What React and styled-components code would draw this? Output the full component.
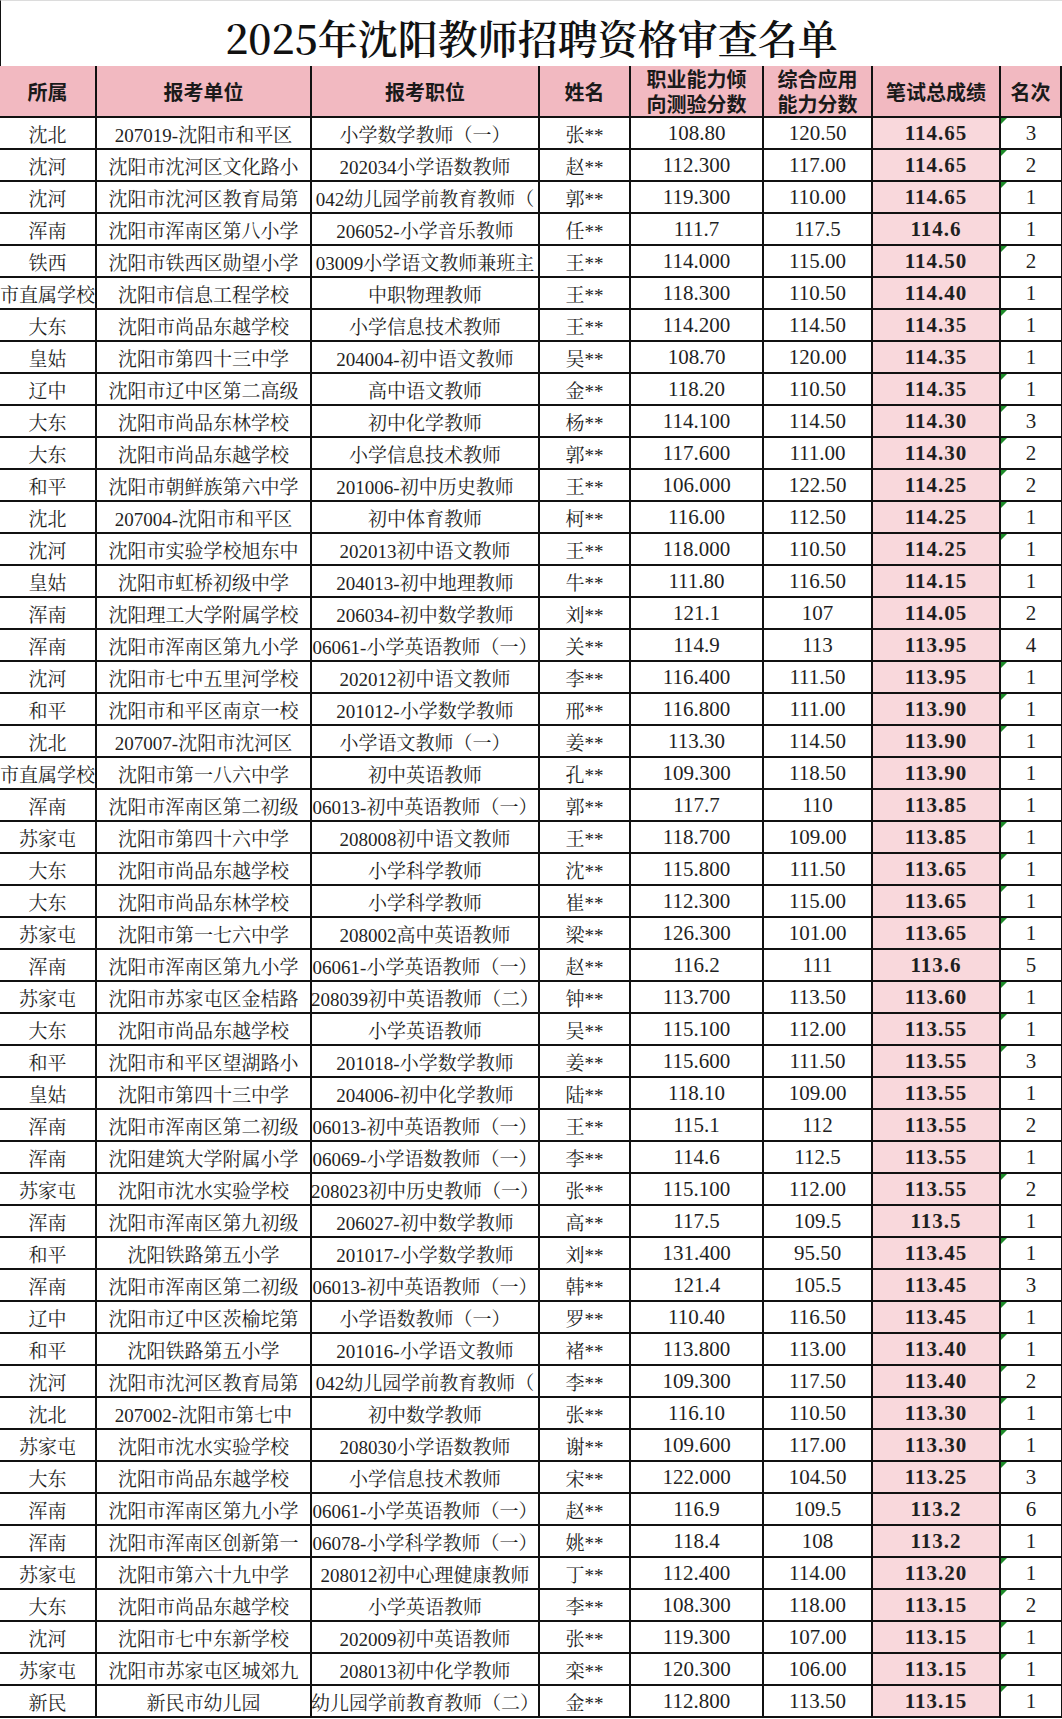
import { createGlobalStyle } from "styled-components";
import styled from "styled-components";

const GlobalStyle = createGlobalStyle`
  html, body {
    margin: 0;
    padding: 0;
    background: #ffffff;
  }
  body {
    font-family: "Liberation Serif", "Noto Serif CJK SC", "Noto Sans CJK SC", serif;
    color: #1a1a1a;
  }
`;

// 所属|报考单位|报考职位|姓名|职业能力|综合应用|总成绩|名次
const raw = `沈北|207019-沈阳市和平区|小学数学教师（一）|张**|108.80|120.50|114.65|3
沈河|沈阳市沈河区文化路小|202034小学语数教师|赵**|112.300|117.00|114.65|2
沈河|沈阳市沈河区教育局第|042幼儿园学前教育教师（|郭**|119.300|110.00|114.65|1
浑南|沈阳市浑南区第八小学|206052-小学音乐教师|任**|111.7|117.5|114.6|1
铁西|沈阳市铁西区勋望小学|03009小学语文教师兼班主|王**|114.000|115.00|114.50|2
市直属学校|沈阳市信息工程学校|中职物理教师|王**|118.300|110.50|114.40|1
大东|沈阳市尚品东越学校|小学信息技术教师|王**|114.200|114.50|114.35|1
皇姑|沈阳市第四十三中学|204004-初中语文教师|吴**|108.70|120.00|114.35|1
辽中|沈阳市辽中区第二高级|高中语文教师|金**|118.20|110.50|114.35|1
大东|沈阳市尚品东林学校|初中化学教师|杨**|114.100|114.50|114.30|3
大东|沈阳市尚品东越学校|小学信息技术教师|郭**|117.600|111.00|114.30|2
和平|沈阳市朝鲜族第六中学|201006-初中历史教师|王**|106.000|122.50|114.25|2
沈北|207004-沈阳市和平区|初中体育教师|柯**|116.00|112.50|114.25|1
沈河|沈阳市实验学校旭东中|202013初中语文教师|王**|118.000|110.50|114.25|1
皇姑|沈阳市虹桥初级中学|204013-初中地理教师|牛**|111.80|116.50|114.15|1
浑南|沈阳理工大学附属学校|206034-初中数学教师|刘**|121.1|107|114.05|2
浑南|沈阳市浑南区第九小学|06061-小学英语教师（一）|关**|114.9|113|113.95|4
沈河|沈阳市七中五里河学校|202012初中语文教师|李**|116.400|111.50|113.95|1
和平|沈阳市和平区南京一校|201012-小学数学教师|邢**|116.800|111.00|113.90|1
沈北|207007-沈阳市沈河区|小学语文教师（一）|姜**|113.30|114.50|113.90|1
市直属学校|沈阳市第一八六中学|初中英语教师|孔**|109.300|118.50|113.90|1
浑南|沈阳市浑南区第二初级|06013-初中英语教师（一）|郭**|117.7|110|113.85|1
苏家屯|沈阳市第四十六中学|208008初中语文教师|王**|118.700|109.00|113.85|1
大东|沈阳市尚品东越学校|小学科学教师|沈**|115.800|111.50|113.65|1
大东|沈阳市尚品东林学校|小学科学教师|崔**|112.300|115.00|113.65|1
苏家屯|沈阳市第一七六中学|208002高中英语教师|梁**|126.300|101.00|113.65|1
浑南|沈阳市浑南区第九小学|06061-小学英语教师（一）|赵**|116.2|111|113.6|5
苏家屯|沈阳市苏家屯区金桔路|208039初中英语教师（二）|钟**|113.700|113.50|113.60|1
大东|沈阳市尚品东越学校|小学英语教师|吴**|115.100|112.00|113.55|1
和平|沈阳市和平区望湖路小|201018-小学数学教师|姜**|115.600|111.50|113.55|3
皇姑|沈阳市第四十三中学|204006-初中化学教师|陆**|118.10|109.00|113.55|1
浑南|沈阳市浑南区第二初级|06013-初中英语教师（一）|王**|115.1|112|113.55|2
浑南|沈阳建筑大学附属小学|06069-小学语数教师（一）|李**|114.6|112.5|113.55|1
苏家屯|沈阳市沈水实验学校|208023初中历史教师（一）|张**|115.100|112.00|113.55|2
浑南|沈阳市浑南区第九初级|206027-初中数学教师|高**|117.5|109.5|113.5|1
和平|沈阳铁路第五小学|201017-小学数学教师|刘**|131.400|95.50|113.45|1
浑南|沈阳市浑南区第二初级|06013-初中英语教师（一）|韩**|121.4|105.5|113.45|3
辽中|沈阳市辽中区茨榆坨第|小学语数教师（一）|罗**|110.40|116.50|113.45|1
和平|沈阳铁路第五小学|201016-小学语文教师|褚**|113.800|113.00|113.40|1
沈河|沈阳市沈河区教育局第|042幼儿园学前教育教师（|李**|109.300|117.50|113.40|2
沈北|207002-沈阳市第七中|初中数学教师|张**|116.10|110.50|113.30|1
苏家屯|沈阳市沈水实验学校|208030小学语数教师|谢**|109.600|117.00|113.30|1
大东|沈阳市尚品东越学校|小学信息技术教师|宋**|122.000|104.50|113.25|3
浑南|沈阳市浑南区第九小学|06061-小学英语教师（一）|赵**|116.9|109.5|113.2|6
浑南|沈阳市浑南区创新第一|06078-小学科学教师（一）|姚**|118.4|108|113.2|1
苏家屯|沈阳市第六十九中学|208012初中心理健康教师|丁**|112.400|114.00|113.20|1
大东|沈阳市尚品东越学校|小学英语教师|李**|108.300|118.00|113.15|2
沈河|沈阳市七中东新学校|202009初中英语教师|张**|119.300|107.00|113.15|1
苏家屯|沈阳市苏家屯区城郊九|208013初中化学教师|栾**|120.300|106.00|113.15|1
新民|新民市幼儿园|幼儿园学前教育教师（二）|金**|112.800|113.50|113.15|1`;

const rows = raw.split("\n").map((line) => line.split("|"));

// rank cells stored as text get the little green marker
const noFlag = ["浑南", "市直属学校", "皇姑"];

const Sheet = styled.div`
  width: 1062px;
`;

const Title = styled.div`
  height: 66px;
  box-sizing: border-box;
  border-top: 1px solid #dcdcdc;
  border-left: 1px solid #111;
  display: flex;
  align-items: center;
  justify-content: center;
  padding: 6px 0 0 0;
  font-family: "Noto Serif CJK SC", "Noto Sans CJK SC", serif;
  font-size: 40px;
  font-weight: 600;
  color: #111;
`;

const Grid = styled.div`
  display: grid;
  grid-template-columns: 97px 215px 228px 91px 133px 109px 128px 61px;
  grid-template-rows: 52px;
  grid-auto-rows: 32px;
`;

const HeadCell = styled.div`
  box-sizing: border-box;
  background: #f2b9c1;
  border-right: 2px solid #111;
  border-bottom: 2px solid #111;
  display: flex;
  align-items: center;
  justify-content: center;
  text-align: center;
  font-family: "Noto Sans CJK SC", sans-serif;
  font-weight: 700;
  font-size: 20px;
  line-height: 25px;
  color: #1a1a1a;
  white-space: pre-line;
  &:last-child {
    border-right: 1px solid #111;
  }
`;

const Cell = styled.div`
  position: relative;
  box-sizing: border-box;
  border-right: ${(p) => (p.$last ? "1px" : "2px")} solid #111;
  border-bottom: 2px solid #111;
  background: ${(p) => (p.$score ? "#f9d8dc" : "#ffffff")};
  display: flex;
  align-items: center;
  justify-content: center;
  overflow: hidden;
  white-space: nowrap;
  font-family: "Liberation Serif", "Noto Serif CJK SC", "Noto Sans CJK SC", serif;
  font-size: ${(p) => (p.$num ? "21px" : "19px")};
  font-weight: ${(p) => (p.$score ? 700 : 400)};
  letter-spacing: ${(p) => (p.$score ? "1px" : "0")};
  color: #1f1f1f;
  padding-top: 1px;

  ${(p) =>
    p.$flag &&
    `
    &::before {
      content: "";
      position: absolute;
      left: 0;
      top: 0;
      border-top: 6px solid #1e8c2a;
      border-right: 6px solid transparent;
    }
  `}
`;

const heads = [
  "所属",
  "报考单位",
  "报考职位",
  "姓名",
  "职业能力倾\n向测验分数",
  "综合应用\n能力分数",
  "笔试总成绩",
  "名次",
];

export default function App() {
  return (
    <>
      <GlobalStyle />
      <Sheet>
        <Title>2025年沈阳教师招聘资格审查名单</Title>
        <Grid>
          {heads.map((h) => (
            <HeadCell key={h}>{h}</HeadCell>
          ))}
          {rows.map((r, i) => {
            const flag = !noFlag.includes(r[0]);
            return [
              <Cell key={i + "a"}>{r[0]}</Cell>,
              <Cell key={i + "b"}>{r[1]}</Cell>,
              <Cell key={i + "c"}>{r[2]}</Cell>,
              <Cell key={i + "d"}>{r[3]}</Cell>,
              <Cell key={i + "e"} $num>{r[4]}</Cell>,
              <Cell key={i + "f"} $num>{r[5]}</Cell>,
              <Cell key={i + "g"} $num $score>{r[6]}</Cell>,
              <Cell key={i + "h"} $num $last $flag={flag}>{r[7]}</Cell>,
            ];
          })}
        </Grid>
      </Sheet>
    </>
  );
}
